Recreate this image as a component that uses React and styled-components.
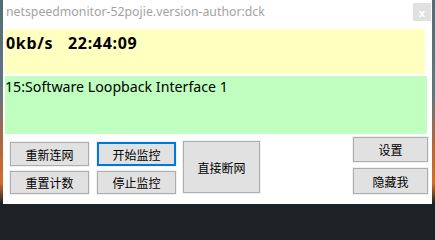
import React from "react";
import styled, { createGlobalStyle } from "styled-components";

const GlobalStyle = createGlobalStyle`
  html, body {
    margin: 0;
    padding: 0;
    background: #1c2226;
  }
`;

const Desktop = styled.div`
  width: 435px;
  height: 208px;
  overflow: hidden;
  background: linear-gradient(
    to bottom,
    #566c75 0%,
    #63757b 45%,
    #b8673a 72%,
    #d0702c 88%,
    #1c2226 98%
  );
`;

const Window = styled.div`
  display: flex;
  flex-direction: column;
  width: 429px;
  height: 204px;
  margin-left: 3px;
  background: #ffffff;
  font-family: "Noto Sans", "Open Sans", sans-serif;
`;

const TitleBar = styled.div`
  display: flex;
  justify-content: space-between;
  align-items: flex-start;
  height: 29px;
`;

const Title = styled.div`
  padding: 3px 0 0 3px;
  font-size: 12.3px;
  line-height: 17px;
  color: #a3a3a3;
`;

const CloseButton = styled.div`
  display: flex;
  justify-content: center;
  align-items: center;
  width: 18px;
  height: 18px;
  margin: 3px 1px 0 0;
  background: #e1e1e1;
  color: #ffffff;
  font-size: 11px;
  font-weight: bold;
`;

const SpeedPanel = styled.div`
  width: 420px;
  height: 45px;
  margin-left: 2px;
  padding: 3px 0 0 1px;
  box-sizing: border-box;
  background: #ffffc0;
  font-size: 16px;
  font-weight: bold;
  letter-spacing: 0.7px;
  line-height: 22px;
  color: #000000;
  white-space: pre;
`;

const InterfacePanel = styled.div`
  width: 422px;
  height: 58px;
  margin: 2px 0 0 2px;
  padding: 1px 0 0 0;
  box-sizing: border-box;
  background: #c0ffc0;
  font-size: 14.2px;
  line-height: 19px;
  color: #000000;
`;

const ButtonRow = styled.div`
  display: flex;
  align-items: flex-start;
  padding: 0 4px 0 7px;
`;

const ButtonColumn = styled.div`
  display: flex;
  flex-direction: column;
  gap: ${(p) => p.$gap}px;
  margin-top: ${(p) => p.$top}px;
  margin-right: ${(p) => p.$right || 0}px;
  margin-left: ${(p) => (p.$pushRight ? "auto" : "0")};
`;

const Button = styled.div`
  display: flex;
  justify-content: center;
  align-items: center;
  width: ${(p) => p.$w}px;
  height: ${(p) => p.$h}px;
  box-sizing: border-box;
  background: #e1e1e1;
  border: ${(p) => (p.$focused ? "2px solid #0078d7" : "1px solid #adadad")};
  box-shadow: 0 0 0 1px #f0f0f0;
  font-family: "Noto Sans CJK SC", sans-serif;
  font-size: 12px;
  color: #000000;
`;

export default function App() {
  return (
    <>
      <GlobalStyle />
      <Desktop>
        <Window>
          <TitleBar>
            <Title>netspeedmonitor-52pojie.version-author:dck</Title>
            <CloseButton>x</CloseButton>
          </TitleBar>
          <SpeedPanel>{"0kb/s   22:44:09"}</SpeedPanel>
          <InterfacePanel>15:Software Loopback Interface 1</InterfacePanel>
          <ButtonRow>
            <ButtonColumn $gap={5} $top={8} $right={8}>
              <Button $w={79} $h={24}>重新连网</Button>
              <Button $w={79} $h={23}>重置计数</Button>
            </ButtonColumn>
            <ButtonColumn $gap={5} $top={8} $right={7}>
              <Button $w={79} $h={24} $focused>开始监控</Button>
              <Button $w={79} $h={23}>停止监控</Button>
            </ButtonColumn>
            <ButtonColumn $gap={0} $top={7}>
              <Button $w={77} $h={52}>直接断网</Button>
            </ButtonColumn>
            <ButtonColumn $gap={6} $top={3} $pushRight>
              <Button $w={75} $h={25}>设置</Button>
              <Button $w={75} $h={26}>隐藏我</Button>
            </ButtonColumn>
          </ButtonRow>
        </Window>
      </Desktop>
    </>
  );
}
